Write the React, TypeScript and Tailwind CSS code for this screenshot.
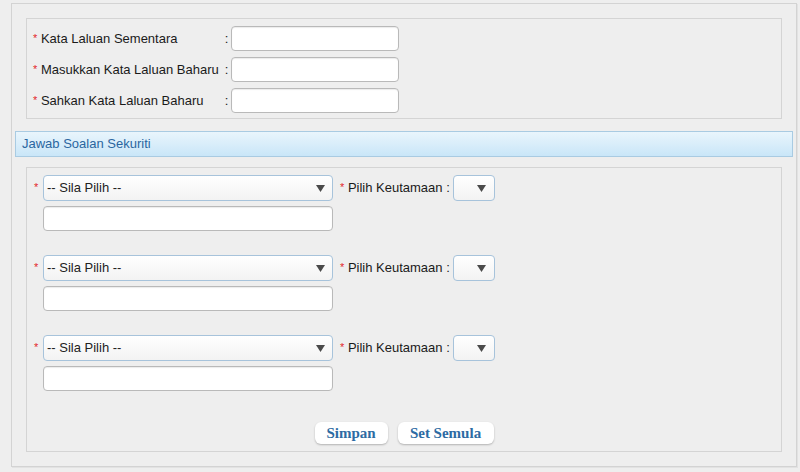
import React from "react";

const passwordFields = [
  "Kata Laluan Sementara",
  "Masukkan Kata Laluan Baharu",
  "Sahkan Kata Laluan Baharu",
];

const Star = () => <span className="text-[#e3262b] text-[11px] relative -top-[1px]">*</span>;

const Arrow = ({ right }: { right: string }) => (
  <svg className={`absolute ${right} top-[9px] pointer-events-none`} width="9" height="7" viewBox="0 0 9 7">
    <path d="M0 0 L9 0 L4.5 7 Z" fill="#4a4a4a" />
  </svg>
);

const SelectBox = ({ width, label }: { width: string; label?: string }) => (
  <div
    className={`relative h-[26px] ${width} rounded-[4px] border border-[#a7c3db] bg-gradient-to-b from-white to-[#f3f3f3] flex items-center pl-[3px] text-[13px] text-[#222]`}
  >
    {label}
    <Arrow right={label ? "right-[7px]" : "right-[8px]"} />
  </div>
);

const TextInput = ({ width }: { width: string }) => (
  <input
    type="text"
    className={`h-[25px] ${width} rounded-[4px] border border-[#b9b9b9] bg-white shadow-[inset_0_1px_1px_rgba(0,0,0,0.08)] outline-none`}
  />
);

const SecurityQuestion = () => (
  <div className="flex flex-col gap-[5px]">
    <div className="flex items-center">
      <span className="w-[9px]">
        <Star />
      </span>
      <SelectBox width="w-[290px]" label="-- Sila Pilih --" />
      <span className="ml-[7px] mr-[3px] whitespace-nowrap">
        <Star /> Pilih Keutamaan :
      </span>
      <SelectBox width="w-[42px]" />
    </div>
    <div className="pl-[9px]">
      <TextInput width="w-[290px]" />
    </div>
  </div>
);

export default function App() {
  return (
    <div className="w-[800px] h-[472px] bg-[#eeeeee] pt-[3px] pl-[11px] font-['Liberation_Sans',Arial,sans-serif] text-[13px] text-[#1a1a1a]">
      <div className="w-[786px] h-[464px] border border-[#d3d3d3] shadow-[1px_1px_0_#e2e2e2] px-[14px] pt-[14px]">
        {/* Kata laluan */}
        <div className="border border-[#d4d4d4] pl-[6px] pt-[7px] pb-[5px] flex flex-col gap-[6px]">
          {passwordFields.map((f) => (
            <div key={f} className="flex items-center">
              <span className="w-[189px] whitespace-nowrap">
                <Star /> {f}
              </span>
              <span className="w-[9px] text-center">:</span>
              <TextInput width="w-[168px]" />
            </div>
          ))}
        </div>

        {/* Header bar */}
        <div className="mt-[12px] -mx-[11px] h-[26px] border border-[#a9cbe2] bg-gradient-to-b from-[#e9f5fc] to-[#c9e6f8] flex items-center pl-[6px] text-[#2b66a0]">
          Jawab Soalan Sekuriti
        </div>

        {/* Soalan sekuriti */}
        <div className="mt-[10px] border border-[#d4d4d4] pl-[7px] pt-[7px] pb-[7px]">
          <div className="flex flex-col gap-[24px]">
            <SecurityQuestion />
            <SecurityQuestion />
            <SecurityQuestion />
          </div>
          <div className="mt-[31px] flex justify-center gap-[10px] pr-[7px]">
            <button className="h-[22px] w-[73px] rounded-[6px] bg-white shadow-[0_1px_2px_rgba(0,0,0,0.25)] font-['Liberation_Serif','Times_New_Roman',serif] font-bold text-[15px] text-[#2d6ba3] leading-none">
              Simpan
            </button>
            <button className="h-[22px] w-[96px] rounded-[6px] bg-white shadow-[0_1px_2px_rgba(0,0,0,0.25)] font-['Liberation_Serif','Times_New_Roman',serif] font-bold text-[15px] text-[#2d6ba3] leading-none">
              Set Semula
            </button>
          </div>
        </div>
      </div>
    </div>
  );
}
